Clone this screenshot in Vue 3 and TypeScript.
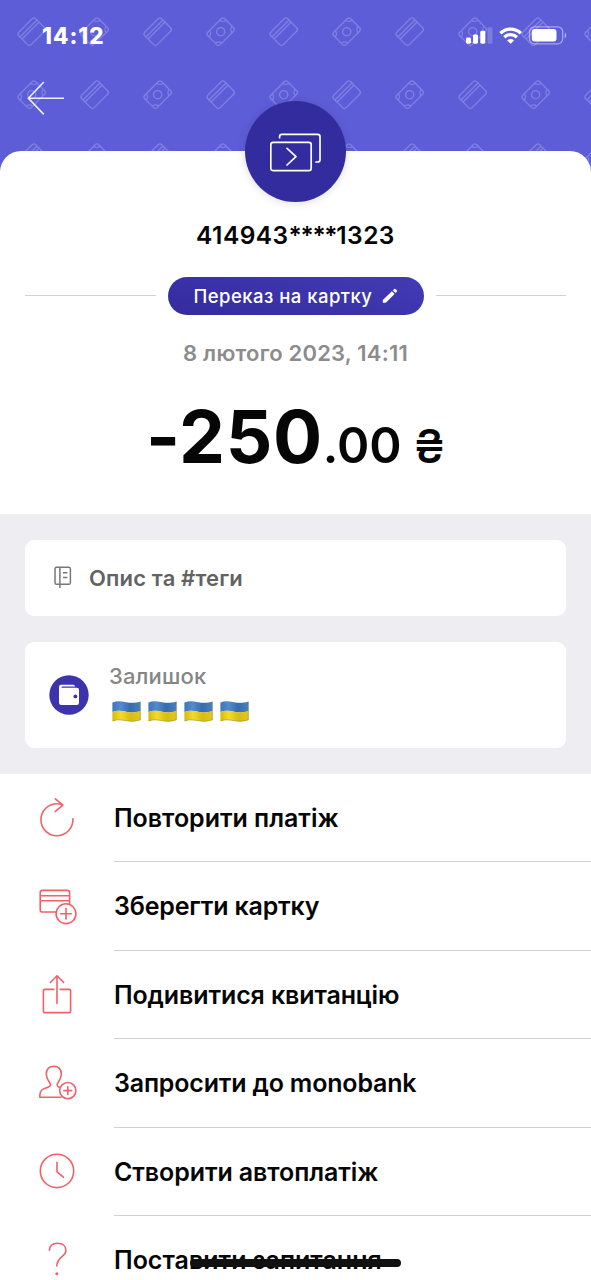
<script setup lang="ts">
interface Motif { x: number; y: number; card: boolean }
interface Action { id: string; label: string; spacing: string }

const STEP = 63
const motifs: Motif[] = []
for (let row = 0; row < 3; row++) {
  for (let col = 0; col < 10; col++) {
    motifs.push({ x: 31.7 + col * STEP, y: 31.7 + row * STEP, card: (row + col) % 2 === 0 })
  }
}

const actions: Action[] = [
  { id: 'repeat', label: 'Повторити платіж', spacing: 's1' },
  { id: 'save', label: 'Зберегти картку', spacing: 's2' },
  { id: 'receipt', label: 'Подивитися квитанцію', spacing: 's3' },
  { id: 'invite', label: 'Запросити до monobank', spacing: 's4' },
  { id: 'auto', label: 'Створити автоплатіж', spacing: 's5' },
  { id: 'ask', label: 'Поставити запитання', spacing: 's6' },
]
</script>

<template>
  <main class="screen">
    <header class="header">
      <svg class="pattern" width="591" height="180" viewBox="0 0 591 180">
        <g v-for="(m, i) in motifs" :key="i" :transform="`translate(${m.x} ${m.y}) rotate(-45)`">
          <rect x="-12" y="-8.8" width="24" height="17.6" rx="2.5" />
          <template v-if="m.card">
            <path d="M-12 -4.6H12M-12 -1.6H12" />
          </template>
          <template v-else>
            <circle r="4.1" />
            <path d="M-12 -4.4A4.6 4.6 0 0 0 -7.4 -8.8M7.4 -8.8A4.6 4.6 0 0 0 12 -4.4M12 4.4A4.6 4.6 0 0 0 7.4 8.8M-7.4 8.8A4.6 4.6 0 0 0 -12 4.4" />
          </template>
        </g>
      </svg>
      <div class="status">
        <span class="clock">14:12</span>
        <svg class="signals" width="102" height="24" viewBox="465 24 102 24" fill="#fff">
          <rect x="466" y="37.5" width="5" height="6.2" rx="1.4" />
          <rect x="473" y="34.5" width="5" height="9.2" rx="1.4" />
          <rect x="480.3" y="30.8" width="5" height="12.9" rx="1.4" />
          <rect x="487.5" y="27.3" width="5" height="16.4" rx="1.4" opacity=".2" />
          <g fill="none" stroke="#fff" stroke-width="3.3">
            <path d="M500.4 33.2A14.6 14.6 0 0 1 520.8 33.2" />
            <path d="M504.3 37.2A9 9 0 0 1 516.9 37.2" />
          </g>
          <path d="M507.2 40.4A4.9 4.9 0 0 1 514 40.4L510.6 43.8Z" />
          <rect x="529.5" y="26.8" width="33.2" height="17" rx="5" fill="none" stroke="#fff" stroke-opacity=".45" stroke-width="1.3" />
          <rect x="531.8" y="29" width="24.7" height="12.6" rx="3" />
          <path d="M564.8 32.3A4.2 4.2 0 0 1 564.8 38.4Z" opacity=".6" />
        </svg>
      </div>
      <svg class="back" width="40" height="38" viewBox="26 79 40 38" fill="none" stroke="#fff" stroke-width="1.6" opacity=".9">
        <path d="M64 98.2H28.6M43.8 82L28.4 98.2L43.8 114.4" />
      </svg>
    </header>

    <section class="sheet">
      <div class="avatar">
        <svg width="52" height="40" viewBox="270 131 52 40" fill="none" stroke="#fff" stroke-width="1.7" stroke-linecap="round" stroke-linejoin="round">
          <rect x="270.8" y="141.3" width="40.4" height="28.3" rx="2.4" />
          <path d="M279.6 136.7V135.7Q279.6 133.4 281.9 133.4H317.6Q320 133.4 320 135.8V158.7Q320 161 317.7 161H316" />
          <path d="M287 147.3L296 155.6L287 164" />
        </svg>
      </div>
      <h1 class="card-number">414943<span class="mask">****</span>1323</h1>
      <div class="category">
        <i class="rule"></i>
        <button class="pill">
          <span>Переказ на картку</span>
          <svg width="16" height="16" viewBox="0 0 16 16" fill="#fff">
            <path d="M.8 12L9.9 3.3L12.6 6L3.8 14.8H.8Z" />
            <path d="M10.8 2.4L12.1 1.1Q12.9 .4 13.7 1.2L14.8 2.3Q15.5 3.1 14.8 3.8L13.5 5.1Z" />
          </svg>
        </button>
        <i class="rule"></i>
      </div>
      <p class="date">8 лютого 2023, 14:11</p>
      <p class="amount"><span class="whole">-250</span><span class="cents">.00</span><span class="currency">₴</span></p>
    </section>

    <section class="details">
      <div class="note">
        <svg width="18" height="23" viewBox="0 0 18 23" fill="none" stroke="#777" stroke-width="1.5">
          <rect x="1" y="1.3" width="15.4" height="17" rx="1.6" />
          <path d="M5.9 1.3V22M9 6.8H13.4M9 11.6H13.4" />
        </svg>
        <span>Опис та #теги</span>
      </div>
      <div class="balance">
        <svg class="wallet" width="40" height="40" viewBox="0 0 40 40">
          <circle cx="20" cy="20" r="19.7" fill="#3d34ab" />
          <path d="M12.2 9.8H24.4Q26 9.8 26 11.4H13.1Q12.4 11.4 12.4 12T13.1 12.7H27.8Q30 12.7 30 14.9V27.8Q30 30 27.8 30H12.2Q10 30 10 27.8V12Q10 9.8 12.2 9.8Z" fill="#fff" />
          <circle cx="26.4" cy="21.4" r="1.9" fill="#3d34ab" />
        </svg>
        <div>
          <p class="balance-label">Залишок</p>
          <div class="flags">
            <svg v-for="n in 4" :key="n" width="29" height="21" viewBox="0 0 29 21">
              <defs>
                <linearGradient :id="`blue${n}`"><stop offset="0" stop-color="#3d77b6" /><stop offset=".3" stop-color="#528bd0" /><stop offset=".62" stop-color="#376cac" /><stop offset="1" stop-color="#477fbd" /></linearGradient>
                <linearGradient :id="`gold${n}`"><stop offset="0" stop-color="#d7b90c" /><stop offset=".3" stop-color="#f4db28" /><stop offset=".64" stop-color="#d9bd13" /><stop offset="1" stop-color="#e2c71f" /></linearGradient>
              </defs>
              <path d="M.4 1.4C5 -.4 9 .2 14 1.2S23 2.2 28.5 .4V10C23 11.8 19 11.8 14 10.8S5 9.2 .4 11Z" :fill="`url(#blue${n})`" />
              <path d="M.4 11C5 9.2 9 9.8 14 10.8S23 11.8 28.5 10V19C23 20.8 19 20.8 14 19.8S5 18.5 .4 20.3Z" :fill="`url(#gold${n})`" />
              <path d="M.6 20C5 18.3 9 18.8 14 19.7S23 20.5 28.3 18.8V.8" fill="none" stroke="#8b8330" stroke-opacity=".6" stroke-width=".8" />
            </svg>
          </div>
        </div>
      </div>
    </section>

    <nav class="actions">
      <a v-for="a in actions" :key="a.id" class="action">
        <svg class="icon" width="48" height="48" viewBox="0 0 48 48">
          <template v-if="a.id === 'repeat'">
            <path d="M39.9 24.8A16 16 0 1 1 24 9.7Q27 9.7 29.5 11.1M22.3 4.9L29.9 11.2L22.3 17.4" />
          </template>
          <template v-else-if="a.id === 'save'">
            <path d="M22.8 29H9.5Q7.2 29 7.2 26.7V9.7Q7.2 7.4 9.5 7.4H34.3Q36.6 7.4 36.6 9.7V20.6M7.2 12.7H36.6M7.2 17.7H36.6" />
            <circle cx="33" cy="30.7" r="9.9" />
            <path d="M33 25.3V36.1M27.6 30.7H38.4" />
          </template>
          <template v-else-if="a.id === 'receipt'">
            <path d="M20.8 18.4H11.8Q10.4 18.4 10.4 19.8V40.2Q10.4 41.6 11.8 41.6H36.2Q37.6 41.6 37.6 40.2V19.8Q37.6 18.4 36.2 18.4H27.2M24 4.7V32.5M17.3 11.5L24 4.7L30.7 11.5" />
          </template>
          <template v-else-if="a.id === 'invite'">
            <path d="M27.8 38.2H6.8C6.6 34 7.5 31.4 10.2 30.1C13.8 28.3 17.3 28.3 17.5 25.8C17.6 23.8 13.4 20.8 13.3 15.2C13.2 10.2 16 7.3 20.8 7.3S28.4 10.2 28.3 15.2C28.2 20.8 24 23.8 24.1 25.8C24.2 27.1 25.2 28 26.9 28.6" />
            <circle cx="34.8" cy="31.6" r="8.1" />
            <path d="M34.8 27.7V35.5M30.9 31.6H38.7" />
          </template>
          <template v-else-if="a.id === 'auto'">
            <circle cx="24" cy="22.9" r="16.7" />
            <path d="M24 14.2V23.8L30.4 29.2" />
          </template>
          <template v-else>
            <path d="M16.4 14.2C16.7 9.8 19.9 7.3 24.4 7.3C29.4 7.3 32.9 10.1 32.9 14.4C32.9 21 23.8 20.4 23.8 30" />
            <circle class="dot" cx="23.8" cy="37.8" r="1.5" />
          </template>
        </svg>
        <span class="label" :class="a.spacing">{{ a.label }}</span>
      </a>
    </nav>
    <div class="home-indicator"></div>
  </main>
</template>

<style>
html, body { margin: 0; overflow: hidden; }
</style>

<style scoped>
.screen {
  position: relative;
  width: 591px;
  height: 1280px;
  overflow: hidden;
  background: #fff;
  font-family: Inter, "Liberation Sans", sans-serif;
  color: #060606;
}
.screen * { box-sizing: border-box; }
p, h1 { margin: 0; font-weight: inherit; }
svg { display: block; flex: none; }
.header { position: relative; height: 151px; padding-top: 24px; }
.pattern {
  position: absolute;
  top: 0;
  left: 0;
  background: #5e5dd8;
  fill: none;
  stroke: #8180e3;
  stroke-width: 1.3;
}
.status {
  position: relative;
  display: flex;
  justify-content: space-between;
  height: 24px;
  padding: 0 24px 0 42px;
}
.clock { font-size: 22.5px; line-height: 24px; font-weight: 800; letter-spacing: 1px; color: #fff; }
.back { position: relative; margin: 31px 0 0 26px; }
.sheet {
  position: relative;
  height: 363px;
  display: flex;
  flex-direction: column;
  align-items: center;
  border-radius: 21px 21px 0 0;
  background: #fff;
}
.avatar {
  display: grid;
  place-items: center;
  width: 101px;
  height: 101px;
  margin-top: -50px;
  border-radius: 50%;
  background: #322c9f;
  box-shadow: 0 1px 8px rgba(0, 0, 0, .14);
}
.card-number { margin-top: 18px; font-size: 24.5px; line-height: 30px; font-weight: 600; letter-spacing: .45px; }
.mask { letter-spacing: -1.3px; }
.category {
  display: flex;
  align-items: center;
  gap: 12px;
  align-self: stretch;
  margin: 26.5px 25px 0;
}
.rule { flex: 1; height: 1px; background: #d2d2d2; }
.pill {
  display: flex;
  align-items: center;
  justify-content: space-between;
  width: 256px;
  height: 38px;
  padding: 0 26px;
  border: 0;
  border-radius: 19px;
  background: linear-gradient(15deg, #352ba0, #423bb4);
  color: #fff;
  font: 500 18.5px/38px Inter, "Liberation Sans", sans-serif;
  letter-spacing: .47px;
  white-space: nowrap;
}
.date { margin-top: 23.5px; font-size: 22px; line-height: 30px; font-weight: 600; letter-spacing: .2px; color: #8c8c8c; white-space: nowrap; }
.amount { display: flex; align-items: baseline; margin-top: 29px; line-height: 80px; font-weight: 700; white-space: nowrap; }
.whole { font-size: 73px; letter-spacing: .6px; }
.cents { font-size: 49px; font-weight: 600; }
.currency { margin-left: 12px; font-size: 47px; font-weight: 500; }
.details {
  display: flex;
  flex-direction: column;
  gap: 25.5px;
  height: 260px;
  padding: 25.5px 25px;
  background: #eeedf2;
}
.note, .balance { display: flex; align-items: center; border-radius: 9px; background: #fff; }
.note { height: 76.5px; padding-left: 29px; gap: 17px; font-size: 22px; font-weight: 600; letter-spacing: .15px; color: #636363; }
.balance { height: 106.5px; padding-left: 24px; gap: 20px; }
.balance-label { margin-top: -5px; font-size: 22px; line-height: 27px; font-weight: 500; letter-spacing: .15px; color: #858585; }
.flags { display: flex; gap: 7.3px; margin: 10.5px 0 0 2.5px; }
.action { display: flex; align-items: center; height: 88.4px; }
.icon { margin: 0 33px; fill: none; stroke: #f2606a; stroke-width: 1.6; stroke-linecap: round; stroke-linejoin: round; }
.dot { fill: #f2606a; stroke: none; }
.label {
  flex: 1;
  height: 100%;
  border-bottom: 1px solid #d1d1d3;
  font-size: 25px;
  line-height: 88.4px;
  font-weight: 600;
  white-space: nowrap;
}
.s1 { letter-spacing: -.03px; }
.s2 { letter-spacing: -.18px; }
.s3 { letter-spacing: -.12px; }
.s4 { letter-spacing: -.18px; }
.s5 { letter-spacing: -.1px; }
.home-indicator {
  position: absolute;
  left: 190px;
  top: 1259px;
  width: 211px;
  height: 8px;
  border-radius: 4px;
  background: #111;
}
</style>
